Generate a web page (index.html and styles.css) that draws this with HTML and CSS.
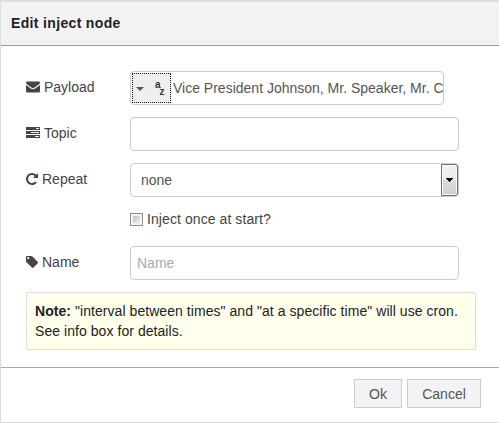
FILE: index.html
```html
<!DOCTYPE html>
<html lang="en">
<head>
<meta charset="utf-8">
<title>Edit inject node</title>
<link rel="stylesheet" href="styles.css">
</head>
<body>
<div class="dialog">
  <header class="title">Edit inject node</header>
  <main class="content">
    <div class="row">
      <div class="label"><svg class="icon" width="14" height="12" viewBox="0 0 14 12"><path d="M0 1.6Q0 .5 1.2.5h11.6Q14 .5 14 1.6q0 1.100-1.200 2L8.600 6.600Q7 7.800 5.400 6.600L1.200 3.600Q0 2.700 0 1.600zM0 4l4.800 3.500q2.200 1.600 4.400 0L14 4v6.300q0 1.200-1.200 1.200H1.200Q0 11.500 0 10.300z"/></svg>Payload</div>
      <div class="field typed">
        <button class="type"><svg width="8" height="4" viewBox="0 0 8 4"><path d="M0 0h8L4 4z"/></svg><span class="az"><b>a</b><b>z</b></span></button>
        <span class="value">Vice President Johnson, Mr. Speaker, Mr. C</span>
      </div>
    </div>
    <div class="row">
      <div class="label"><svg class="icon" width="14" height="12" viewBox="0 0 14 12"><path fill-rule="evenodd" d="M0 0h14v3H0zM10 1h3v1h-3zM0 4h14v3H0zM5 5h8v1H5zM0 8h14v3H0zM9 9h4v1H9z"/></svg>Topic</div>
      <div class="field"></div>
    </div>
    <div class="row">
      <div class="label"><svg class="icon" width="12" height="12" viewBox="0 0 1536 1536"><path d="M1536 128v448q0 26-19 45t-45 19h-448q-42 0-59-40-17-39 14-69l138-138Q969 256 768 256q-104 0-198.500 40.500T406 406 296.500 569.500 256 768t40.500 198.500T406 1130t163.500 109.500T768 1280q119 0 225-52t179-147q7-10 23-12 15 0 25 9l137 138q9 8 9.500 20.500T1359 1259q-109 132-264 204.500T768 1536q-156 0-298-61t-245-164-164-245T0 768t61-298 164-245T470 61 768 0q147 0 284.500 55.500T1297 212l130-129q29-31 70-14 39 17 39 59z"/></svg>Repeat</div>
      <div class="field select"><span>none</span><span class="arrow"><svg width="7" height="4" viewBox="0 0 7 4" shape-rendering="crispEdges"><path d="M0 0h7v1H6v1H5v1H4v1H3V3H2V2H1V1H0z"/></svg></span></div>
    </div>
    <div class="row check"><span class="box"></span>Inject once at start?</div>
    <div class="row name">
      <div class="label"><svg class="icon" width="12" height="12" viewBox="0 0 12 12"><path fill-rule="evenodd" d="M0 1.100Q0 0 1.100 0h3.800q.9 0 1.600.6l5.100 5.200q.7.800 0 1.600l-4.100 4.200q-.8.700-1.600 0L.7 6.500Q0 5.800 0 4.900zM2.200 1.100a1.100 1.100 0 1 0 0 2.200 1.100 1.100 0 0 0 0-2.200z"/></svg>Name</div>
      <div class="field placeholder">Name</div>
    </div>
    <div class="note"><b>Note:</b> "interval between times" and "at a specific time" will use cron.<br>See info box for details.</div>
  </main>
  <footer class="footer"><button class="btn ok">Ok</button><button class="btn cancel">Cancel</button></footer>
</div>
</body>
</html>
```
FILE: styles.css
```css
* { box-sizing: border-box; }
body {
  margin: 0;
  font: 14px/20px "Liberation Sans", Arial, sans-serif;
  color: #444;
  background: #fff;
}
button { font: inherit; margin: 0; }
.dialog {
  display: flex;
  flex-direction: column;
  height: 423px;
  border: 1px solid #ddd;
  border-top: 2px solid #ddd;
  border-right: 0;
  overflow: hidden;
}
.title {
  height: 44px;
  padding: 11px 10px;
  border-bottom: 1px solid #999;
  background: #f2f2f2;
  color: #222;
  font-size: 14px;
  font-weight: bold;
  letter-spacing: 0.34px;
}
.content {
  height: 321px;
  padding: 25px 23px 0 25px;
}
.row {
  display: flex;
  height: 34px;
  margin-bottom: 12px;
}
.label {
  display: flex;
  align-items: center;
  gap: 4px;
  width: 104px;
  height: 32px;
}
.icon { fill: #444; }
.field {
  display: flex;
  align-items: center;
  width: 329px;
  height: 34px;
  border: 1px solid #ccc;
  border-radius: 4px;
  background: #fff;
  color: #555;
}
.typed { width: 314px; overflow: hidden; }
.type {
  display: flex;
  flex: none;
  align-items: center;
  width: 39px;
  height: 30px;
  margin-left: 1px;
  padding: 0 0 0 3px;
  border: 1px dotted #111;
  background: #eee;
}
.type svg { margin-top: 2px; fill: #555; }
.az {
  display: flex;
  margin-left: 11px;
  color: #333;
  font-size: 10px;
  line-height: 10px;
}
.az b:first-child { margin-top: -7px; }
.az b:last-child { margin: 0 0 -7px -1px; }
.value { margin-left: 2px; white-space: nowrap; }
.select { justify-content: space-between; padding-left: 10px; }
.arrow {
  display: flex;
  align-items: center;
  justify-content: center;
  width: 17px;
  height: 32px;
  border: 1px solid #707070;
  border-radius: 0 3px 3px 0;
  background: linear-gradient(#f2f2f2, #ebebeb 50%, #ddd 50%, #cfcfcf);
  box-shadow: inset 0 0 0 1px #fafafa;
}
.check {
  align-items: center;
  height: 20px;
  margin: 0 0 17px 104px;
  letter-spacing: 0.08px;
}
.box {
  width: 13px;
  height: 13px;
  margin-right: 4px;
  border: 1px solid #8e8f8f;
  background: linear-gradient(135deg, #b5bac3, #f5f5f5) padding-box;
  box-shadow: inset 0 0 0 2px #f4f4f4;
}
.placeholder { padding-left: 6px; color: #aaa; }
.note {
  width: 450px;
  height: 58px;
  padding: 8px;
  border: 1px solid #ddd;
  border-radius: 2px;
  background: #ffffeb;
  color: #222;
  white-space: nowrap;
  letter-spacing: 0.055px;
}
.footer {
  display: flex;
  justify-content: flex-end;
  flex: 1;
  gap: 5px;
  padding: 11px 18px 0 0;
  border-top: 1px solid #aaa;
}
.btn {
  height: 29px;
  padding: 0;
  border: 1px solid #ccc;
  background: #f3f3f3;
  color: #555;
}
.ok { width: 48px; }
.cancel { width: 74px; }
```
